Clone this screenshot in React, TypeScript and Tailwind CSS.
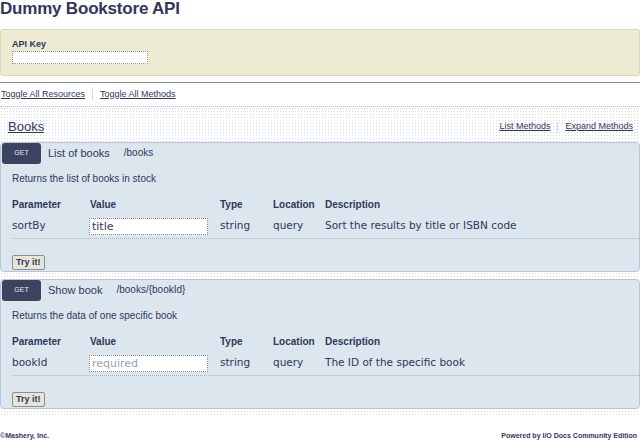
import React from 'react';

interface Endpoint {
  title: string;
  path: string;
  summary: string;
  param: string;
  value: string;
  placeholder: string;
  description: string;
}

const endpoints: Endpoint[] = [
  {
    title: 'List of books',
    path: '/books',
    summary: 'Returns the list of books in stock',
    param: 'sortBy',
    value: 'title',
    placeholder: '',
    description: 'Sort the results by title or ISBN code',
  },
  {
    title: 'Show book',
    path: '/books/{bookId}',
    summary: 'Returns the data of one specific book',
    param: 'bookId',
    value: '',
    placeholder: 'required',
    description: 'The ID of the specific book',
  },
];

const EndpointBox: React.FC<{ ep: Endpoint; first?: boolean }> = ({ ep, first }) => {
  return (
    <div className={`${first ? '' : 'mt-[7px]'} h-[130px] border border-[#b7c6d5] rounded-[4px] bg-[#dce6ef] flex flex-col`}>
      <div className="flex items-start h-[21px]">
        <div className="ml-[1px] w-[39px] h-[21px] rounded-[3px] bg-[#3b4361] text-[#e8ebf2] text-[7px] flex items-center justify-center">
          GET
        </div>
        <span className="ml-[7px] pt-[3px] text-[11px] leading-[14px]">{ep.title}</span>
        <span className="ml-[14px] pt-[4px] text-[10px] leading-[12px]">{ep.path}</span>
      </div>
      <div className="pl-[11px] flex flex-col">
        <p className="mt-[9px] text-[10px] leading-[12px]">{ep.summary}</p>
        <div className="mt-[14px] flex text-[10px] font-bold leading-[12px]">
          <span className="w-[78px]">Parameter</span>
          <span className="w-[130px]">Value</span>
          <span className="w-[53px]">Type</span>
          <span className="w-[52px]">Location</span>
          <span>Description</span>
        </div>
        <div className="mt-[6px] h-[18px] flex items-center text-[10.5px] font-['DejaVu_Sans',sans-serif]">
          <span className="w-[77px]">{ep.param}</span>
          <div className="w-[131px]">
            <input
              readOnly
              value={ep.value}
              placeholder={ep.placeholder}
              className="w-[119px] h-[17px] px-[2px] border border-dotted border-[#7f868c] bg-white text-[11px] text-[#30375a] placeholder:text-[#a0a4a8] outline-none"
            />
          </div>
          <span className="w-[53px]">string</span>
          <span className="w-[52px]">query</span>
          <span>{ep.description}</span>
        </div>
        <div className="mt-[3px] border-t border-dotted border-[#aeb7bf]" />
        <div className="mt-[9px]">
          <button className="h-[15px] px-[3px] border border-[#8a8f94] rounded-[2px] bg-[#e6e5d8] text-[9px] font-bold leading-[12px] text-[#30375a]">
            Try it!
          </button>
        </div>
      </div>
    </div>
  );
};

export default function App() {
  return (
    <div className="w-[640px] h-[441px] bg-white font-['Liberation_Sans',Arial,sans-serif] text-[#30375a] flex flex-col overflow-hidden">
      <h1 className="h-[29px] text-[17px] font-bold leading-[18px] tracking-[-0.2px]">Dummy Bookstore API</h1>
      <div className="h-[47px] border border-dotted border-[#c9c4a0] rounded-[3px] bg-[#edebd1] px-[11px] pt-[9px] flex flex-col">
        <label className="text-[9px] font-bold leading-[10px]">API Key</label>
        <input readOnly className="mt-[2px] w-[136px] h-[13px] border border-dotted border-[#8d9296] bg-white outline-none" />
      </div>
      <div className="mt-[6px] border-t border-[#8a949b]" />
      <div className="h-[23px] flex items-center text-[9px]">
        <a className="underline pl-[1px]">Toggle All Resources</a>
        <span className="mx-[7px] w-px h-[11px] bg-[#d5d8da]" />
        <a className="underline">Toggle All Methods</a>
      </div>
      <div className="border-t border-dotted border-[#b9c0c6] bg-[radial-gradient(#d6dbdf_0.8px,transparent_0.8px)] bg-[length:3px_3px] pb-[7px] flex flex-col">
        <div className="h-[35px] pt-[5px] flex items-center justify-between">
          <a className="pl-[8px] text-[13px] underline">Books</a>
          <div className="flex items-center text-[9px] pr-[7px]">
            <a className="underline">List Methods</a>
            <span className="mx-[7px] w-px h-[11px] bg-[#d5d8da]" />
            <a className="underline">Expand Methods</a>
          </div>
        </div>
        {endpoints.map((ep, i) => (
          <EndpointBox key={i} ep={ep} first={i === 0} />
        ))}
      </div>
      <div className="flex-1 flex items-end justify-between pb-[1px] text-[7px] font-bold leading-[8px]">
        <span>©Mashery, Inc.</span>
        <span className="pr-[3px]">Powered by I/O Docs Community Edition</span>
      </div>
    </div>
  );
}
